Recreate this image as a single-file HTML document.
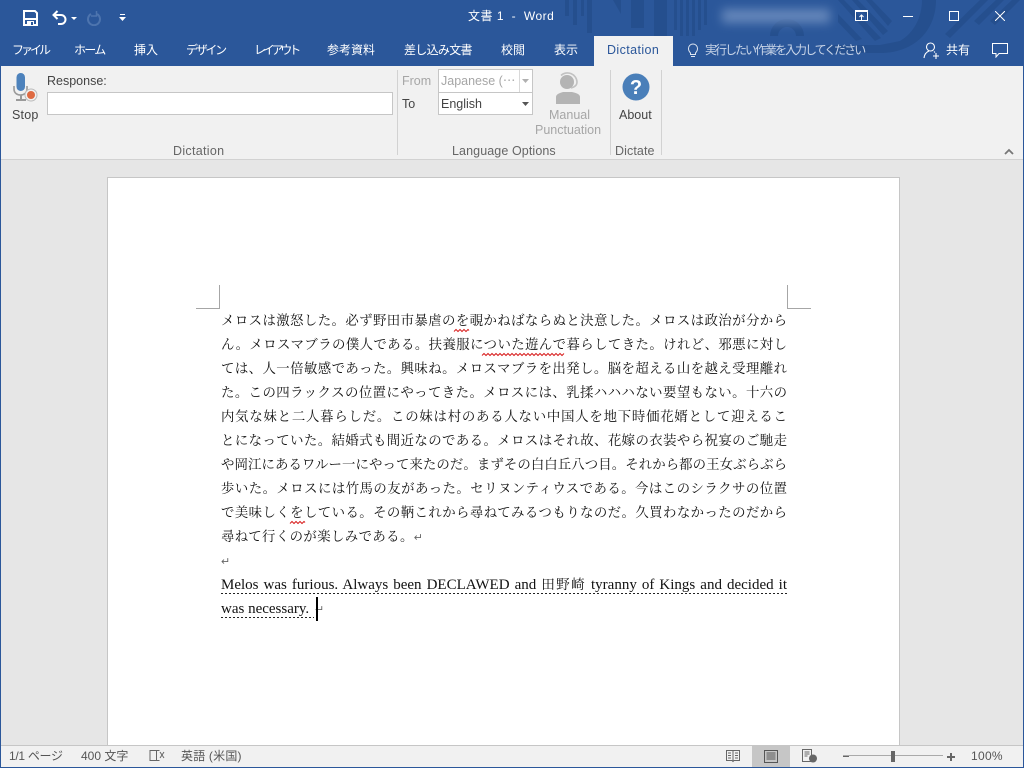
<!DOCTYPE html>
<html lang="ja">
<head>
<meta charset="utf-8">
<title>文書 1 - Word</title>
<style>
html,body{margin:0;padding:0;width:1024px;height:768px;overflow:hidden;background:#e6e6e6}
body{position:relative;font-family:"Liberation Sans","Noto Sans CJK JP",sans-serif;font-size:12px;color:#444}
div,span,svg{position:absolute;display:block}
.t{white-space:nowrap;line-height:16px}
.tab{color:#fff;top:42px;font-size:12px}
.lbl{color:#444;font-size:12.5px}
.gray{color:#a6a6a6}
.grp{color:#666;font-size:12.5px;top:143px;letter-spacing:.1px}
.ln{left:221px;width:566px;height:24px;line-height:24px;font-family:"Liberation Serif","Noto Serif CJK JP","Noto Serif CJK SC",serif;font-size:13.4px;color:#111;text-align:justify;text-align-last:justify;text-justify:inter-character;white-space:nowrap}
.ln.l{text-align:left;text-align-last:left}
.en{font-size:15px;text-justify:inter-word}
.en b{font-weight:normal;font-size:13.6px}
.st{top:748px;color:#555;font-size:12px}
</style>
</head>
<body>
<div style="left:0;top:0;width:1024px;height:66px;background:#2b579a"></div>
<svg style="left:0;top:0" width="1024" height="66" viewBox="0 0 1024 66">
<g fill="#254f8e">
<rect x="565" y="0" width="4" height="16"/><rect x="573" y="0" width="4" height="25"/><rect x="581" y="0" width="3" height="16"/><rect x="587" y="0" width="5" height="33"/>
<path d="M613 0h8v14z"/><rect x="631" y="0" width="13" height="28"/><rect x="654" y="0" width="13" height="36"/>
<rect x="674" y="0" width="3" height="30"/><rect x="680" y="0" width="3" height="36"/><rect x="686" y="0" width="3" height="36"/><rect x="692" y="0" width="3" height="36"/><rect x="698" y="0" width="3" height="30"/><rect x="704" y="0" width="3" height="25"/>
<path d="M770 36a17 17 0 0 1 34 0h-8a9 9 0 0 0-18 0z"/>
<path d="M838 0h6l37 38-6 3zM838 14l24 25-6 2-18-19zM852 0h6l30 31-5 4zM866 0h6l20 21-4 5z"/>
<path d="M922 0h14c0 30-21 53-56 53h-50l-6-8h56l20-4c14-8 22-24 22-41z"/>
<path d="M980 0h8l-38 38-5-4zM996 0h8l-25 25-5-4zM1012 0h8l-25 25-5-4z"/>
</g>
</svg>
<div style="left:722px;top:9px;width:108px;height:14px;background:#6f8fc0;filter:blur(5px);opacity:.85"></div>

<svg style="left:23px;top:10px" width="15" height="16" viewBox="0 0 15 16"><path d="M1 1h11l2 2v12H1z" fill="none" stroke="#fff" stroke-width="2"/><rect x="1" y="8" width="13" height="2" fill="#fff"/><rect x="4" y="11" width="7" height="4" fill="#fff"/><rect x="8" y="12" width="2" height="3" fill="#2b579a"/></svg>
<svg style="left:52px;top:10px" width="26" height="16" viewBox="0 0 26 16"><path d="M2 5h7a4.500 4.500 0 0 1 0 9H6" fill="none" stroke="#fff" stroke-width="2"/><path d="M5.500 1L1.500 5l4 4" fill="none" stroke="#fff" stroke-width="2"/><path d="M19 7h6l-3 3z" fill="#fff"/></svg>
<svg style="left:86px;top:10px" width="16" height="16" viewBox="0 0 16 16"><path d="M5 4a6 6 0 1 0 6 0" fill="none" stroke="#4d74ae" stroke-width="2"/><path d="M10.500 1v5H5" fill="none" stroke="#4d74ae" stroke-width="1.500"/></svg>
<svg style="left:119px;top:14px" width="7" height="8" viewBox="0 0 7 8"><rect x="1" y="0" width="5" height="1" fill="#fff"/><path d="M0 3h7L3.500 7z" fill="#fff"/></svg>

<div class="t" style="left:468px;top:8px;color:#fff;font-size:12px;letter-spacing:.5px">文書 1 &nbsp;-&nbsp; Word</div>

<svg style="left:855px;top:10px" width="14" height="12" viewBox="0 0 14 12"><rect x=".5" y=".5" width="12" height="10" fill="none" stroke="#fff"/><rect x="1" y="1" width="11" height="1" fill="#fff"/><path d="M6.500 10V5M4.500 7l2-2 2 2" fill="none" stroke="#fff"/></svg>
<div style="left:903px;top:16px;width:10px;height:1px;background:#fff"></div>
<div style="left:949px;top:11px;width:8px;height:8px;border:1px solid #fff"></div>
<svg style="left:995px;top:11px" width="10" height="10" viewBox="0 0 10 10"><path d="M0 0L10 10M10 0L0 10" stroke="#fff" stroke-width="1"/></svg>

<div class="t tab" style="left:12px;letter-spacing:-3px">ファイル</div>
<div class="t tab" style="left:74px;letter-spacing:-1.700px">ホーム</div>
<div class="t tab" style="left:134px">挿入</div>
<div class="t tab" style="left:186px;letter-spacing:-2.300px">デザイン</div>
<div class="t tab" style="left:254px;letter-spacing:-3.200px">レイアウト</div>
<div class="t tab" style="left:327px">参考資料</div>
<div class="t tab" style="left:404px;letter-spacing:-.7px">差し込み文書</div>
<div class="t tab" style="left:501px">校閲</div>
<div class="t tab" style="left:554px">表示</div>
<div style="left:594px;top:36px;width:79px;height:30px;background:#f1f1f1"></div>
<div class="t" style="left:607px;top:42px;color:#2b579a;font-size:12.500px;letter-spacing:.4px">Dictation</div>
<svg style="left:687px;top:43px" width="12" height="15" viewBox="0 0 12 15"><path d="M3.500 10C2 8.500 1.500 7.500 1.500 5.500a4.500 4.500 0 0 1 9 0c0 2-.5 3-2 4.500v1.500h-5zM4 13.500h4" fill="none" stroke="#dfe6f1" stroke-width="1"/></svg>
<div class="t tab" style="left:705px;color:#c9d5e8;letter-spacing:-2px">実行したい作業を入力してください</div>
<svg style="left:923px;top:42px" width="18" height="17" viewBox="0 0 18 17"><circle cx="7.500" cy="5" r="4" fill="none" stroke="#fff" stroke-width="1.100"/><path d="M1 16c.5-4 2.500-6 5-7M11 9.500l1 1M10 14h6M13 11v6" fill="none" stroke="#fff" stroke-width="1.100"/></svg>
<div class="t tab" style="left:946px">共有</div>
<svg style="left:992px;top:43px" width="16" height="15" viewBox="0 0 16 15"><path d="M.5.500h15v10H7l-3 3.500v-3.500H.500z" fill="none" stroke="#fff"/></svg>

<div style="left:1px;top:66px;width:1022px;height:93px;background:#f1f1f1;border-bottom:1px solid #d2d2d2"></div>
<div style="left:0;top:66px;width:1px;height:702px;background:#2b579a"></div>
<div style="left:1023px;top:66px;width:1px;height:702px;background:#2b579a"></div>

<svg style="left:12px;top:72px" width="28" height="32" viewBox="0 0 28 32"><path d="M2 14v3c0 4 3 6 6.500 6S15 21 15 17v-3" fill="none" stroke="#9a9a9a" stroke-width="1.600"/><rect x="8" y="23" width="2" height="4" fill="#9a9a9a"/><rect x="4" y="27" width="10" height="2" fill="#9a9a9a"/><rect x="4.500" y="1" width="8.500" height="18" rx="4.200" fill="#4d82bc"/><circle cx="19" cy="23" r="6" fill="#f1f1f1" stroke="#bbb"/><circle cx="19" cy="23" r="4" fill="#de6a42"/></svg>
<div class="t lbl" style="left:12px;top:107px;letter-spacing:.2px">Stop</div>
<div class="t lbl" style="left:47px;top:73px">Response:</div>
<div style="left:47px;top:92px;width:344px;height:21px;background:#fff;border:1px solid #c6c6c6"></div>
<div class="t grp" style="left:173px;letter-spacing:.3px">Dictation</div>
<div style="left:397px;top:70px;width:1px;height:85px;background:#d2d2d2"></div>

<div class="t lbl gray" style="left:402px;top:73px">From</div>
<div class="t lbl" style="left:402px;top:96px">To</div>
<div style="left:438px;top:69px;width:93px;height:22px;background:#fff;border:1px solid #c6c6c6"></div>
<div style="left:519px;top:70px;width:1px;height:22px;background:#d9d9d9"></div>
<div style="left:438px;top:92px;width:93px;height:21px;background:#fff;border:1px solid #c6c6c6"></div>
<div class="t lbl gray" style="left:441px;top:73px">Japanese (⋯</div>
<svg style="left:522px;top:79px" width="7" height="4" viewBox="0 0 7 4"><path d="M0 0h7L3.500 4z" fill="#b0b0b0"/></svg>
<div class="t lbl" style="left:441px;top:96px">English</div>
<svg style="left:522px;top:102px" width="7" height="4" viewBox="0 0 7 4"><path d="M0 0h7L3.500 4z" fill="#555"/></svg>
<svg style="left:555px;top:72px" width="28" height="33" viewBox="0 0 28 33"><circle cx="12" cy="10" r="7" fill="#b4b4b4"/><path d="M6 3.500a9.500 9.500 0 0 1 16 6.500c0 3-2 5-6 6" fill="none" stroke="#c2c2c2" stroke-width="1.600"/><path d="M1 32v-7c0-3 4-4 7-5h9c4 1 8 2 8 5v7z" fill="#b4b4b4"/></svg>
<div class="t lbl gray" style="left:549px;top:107px">Manual</div>
<div class="t lbl gray" style="left:535px;top:122px">Punctuation</div>
<div class="t grp" style="left:452px">Language Options</div>
<div style="left:610px;top:70px;width:1px;height:85px;background:#d2d2d2"></div>

<svg style="left:622px;top:73px" width="28" height="28" viewBox="0 0 28 28"><circle cx="14" cy="14" r="13.500" fill="#4a7fb9"/><text x="14" y="21" text-anchor="middle" font-family="Liberation Sans" font-weight="bold" font-size="20" fill="#fff">?</text></svg>
<div class="t lbl" style="left:619px;top:107px">About</div>
<div class="t grp" style="left:615px">Dictate</div>
<div style="left:661px;top:70px;width:1px;height:85px;background:#d2d2d2"></div>
<svg style="left:1004px;top:148px" width="10" height="7" viewBox="0 0 10 7"><path d="M1 6l4-4 4 4" fill="none" stroke="#777" stroke-width="1.800"/></svg>

<div style="left:107px;top:177px;width:791px;height:568px;background:#fff;border:1px solid #c6c6c6;border-bottom:0"></div>
<div style="left:196px;top:308px;width:24px;height:1px;background:#a6a6a6"></div>
<div style="left:219px;top:285px;width:1px;height:24px;background:#a6a6a6"></div>
<div style="left:787px;top:308px;width:24px;height:1px;background:#a6a6a6"></div>
<div style="left:787px;top:285px;width:1px;height:24px;background:#a6a6a6"></div>

<div class="ln" style="top:309px">メロスは激怒した。必ず野田市暴虐のを覗かねばならぬと決意した。メロスは政治が分から</div>
<div class="ln" style="top:333px">ん。メロスマブラの僕人である。扶養服についた遊んで暮らしてきた。けれど、邪悪に対し</div>
<div class="ln" style="top:357px">ては、人一倍敏感であった。興味ね。メロスマブラを出発し。脳を超える山を越え受理離れ</div>
<div class="ln" style="top:381px">た。この四ラックスの位置にやってきた。メロスには、乳揉ハハハない要望もない。十六の</div>
<div class="ln" style="top:405px">内気な妹と二人暮らしだ。この妹は村のある人ない中国人を地下時価花婿として迎えるこ</div>
<div class="ln" style="top:429px">とになっていた。結婚式も間近なのである。メロスはそれ故、花嫁の衣装やら祝宴のご馳走</div>
<div class="ln" style="top:453px">や岡江にあるワルー一にやって来たのだ。まずその白白丘八つ目。それから都の王女ぶらぶら</div>
<div class="ln" style="top:477px">歩いた。メロスには竹馬の友があった。セリヌンティウスである。今はこのシラクサの位置</div>
<div class="ln" style="top:501px">で美味しくをしている。その鞆これから尋ねてみるつもりなのだ。久買わなかったのだから</div>
<div class="ln l" style="top:525px;letter-spacing:.4px">尋ねて行くのが楽しみである。<span style="position:static;display:inline;color:#666;font-size:11px">↵</span></div>
<div class="ln l" style="top:550px;color:#666;font-size:11px">↵</div>
<div class="ln en" style="top:573px">Melos was furious. Always been DECLAWED and <b>田野崎</b> tyranny of Kings and decided it</div>
<div class="ln l en" style="top:597px">was necessary.</div>
<div class="ln l" style="top:598px;left:315px;width:12px;color:#666;font-size:11px">↵</div>

<svg style="left:0;top:0" width="1024" height="768" viewBox="0 0 1024 768">
<path d="M454 331.500l2-2 2 2 2-2 2 2 2-2 2 2 2-2 1 1" fill="none" stroke="#d81e1e" stroke-width="1"/>
<path d="M482 355.500l2-2 2 2 2-2 2 2 2-2 2 2 2-2 2 2 2-2 2 2 2-2 2 2 2-2 2 2 2-2 2 2 2-2 2 2 2-2 2 2 2-2 2 2 2-2 2 2 2-2 2 2 2-2 2 2 2-2 2 2 2-2 2 2 2-2 2 2 2-2 2 2 2-2 2 2 2-2 2 2 2-2" fill="none" stroke="#d81e1e" stroke-width="1"/>
<path d="M290 523.500l2-2 2 2 2-2 2 2 2-2 2 2 2-2 1 1" fill="none" stroke="#d81e1e" stroke-width="1"/>
<path d="M221 593.500H787M221 617.500H314" stroke="#222" stroke-width="1" stroke-dasharray="2 2" fill="none"/>
</svg>
<div style="left:316px;top:597px;width:2px;height:24px;background:#000"></div>

<div style="left:1px;top:745px;width:1022px;height:22px;background:#f1f1f1;border-top:1px solid #c6c6c6;box-sizing:border-box"></div>
<div style="left:0;top:767px;width:1024px;height:1px;background:#2b579a"></div>
<div class="t st" style="left:9px;letter-spacing:-.3px">1/1 ページ</div>
<div class="t st" style="left:81px">400 文字</div>
<svg style="left:149px;top:749px" width="16" height="14" viewBox="0 0 16 14"><path d="M7.500 1.500H1v10h6.500zM7.500 1.500l3 0M7.500 11.500h3" fill="none" stroke="#666"/><path d="M11 3l4 6M15 3l-4 6" stroke="#666"/></svg>
<div class="t st" style="left:181px;letter-spacing:.2px">英語 (米国)</div>

<svg style="left:726px;top:749px" width="14" height="14" viewBox="0 0 14 14"><path d="M.5 1.500h13v10H8l-1 1-1-1H.5zM7 1.500v10M2 4h3M2 6.500h3M2 9h3M9 4h3M9 6.500h3M9 9h3" fill="none" stroke="#666"/></svg>
<div style="left:752px;top:746px;width:38px;height:21px;background:#c6c6c6"></div>
<svg style="left:764px;top:750px" width="14" height="13" viewBox="0 0 14 13"><path d="M.5.500h13v12H.5zM2.500 3h9M2.500 5h9M2.500 7h9M2.500 9h9" fill="none" stroke="#555"/></svg>
<svg style="left:802px;top:749px" width="15" height="14" viewBox="0 0 15 14"><path d="M.5.500h9v12H.500zM2.500 3h5M2.500 5h5M2.500 7h3" fill="none" stroke="#666"/><circle cx="11" cy="9.500" r="4" fill="#666"/></svg>
<div style="left:843px;top:755px;width:6px;height:2px;background:#666"></div>
<div style="left:843px;top:755px;width:100px;height:1px;background:#aaa"></div>
<div style="left:891px;top:751px;width:4px;height:11px;background:#666"></div>
<div style="left:947px;top:756px;width:8px;height:2px;background:#666"></div>
<div style="left:950px;top:753px;width:2px;height:8px;background:#666"></div>
<div class="t st" style="left:971px;letter-spacing:.3px">100%</div>
</body>
</html>
